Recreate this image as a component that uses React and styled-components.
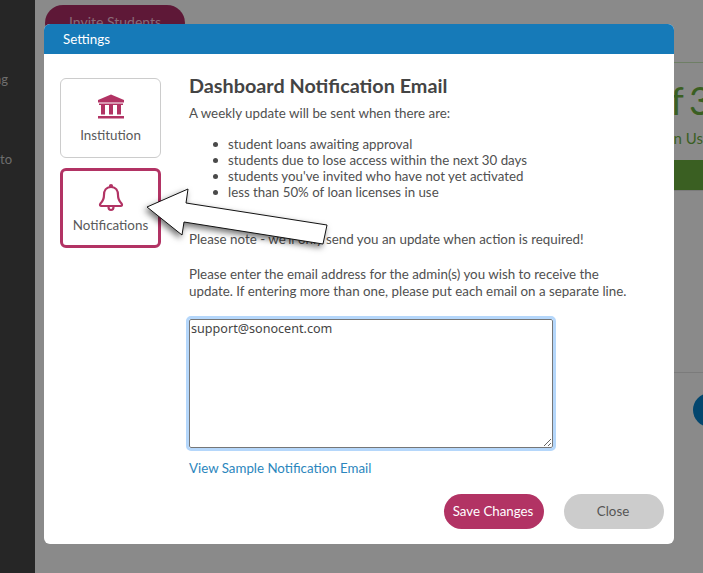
import React from "react";
import styled, { createGlobalStyle } from "styled-components";

const Global = createGlobalStyle`
  html, body { margin: 0; padding: 0; background: #8a8a8a; }
  body { font-family: "Noto Sans", "Open Sans", sans-serif; }
`;

const Page = styled.div`
  position: relative;
  width: 703px;
  height: 573px;
  overflow: hidden;
  display: grid;
  grid-template-columns: 35px 1fr;
  background: #8a8a8a;
`;

const Sidebar = styled.aside`
  background: #262626;
  padding-top: 71px;
  display: flex;
  flex-direction: column;
  gap: 64px;
  overflow: hidden;
`;

const SideItem = styled.div`
  width: ${(p) => p.$end}px;
  display: flex;
  justify-content: flex-end;
  font: 13px/16px "Lato", sans-serif;
  color: #6e6e6e;
  white-space: nowrap;
`;

const Main = styled.main`
  min-width: 0;
  overflow: hidden;
  padding: 5px 0 0 10px;
`;

const InviteButton = styled.div`
  width: 140px;
  height: 36px;
  box-sizing: border-box;
  padding-top: 9px;
  border-radius: 18px;
  background: #5e1837;
  color: #8a6a78;
  font: 14px/16px "Lato", sans-serif;
  text-align: center;
`;

const Panel = styled.section`
  margin-top: 21px;
  height: 309px;
  border-top: 1px solid #6f7f66;
  border-bottom: 1px solid #7b7b7b;
  display: flex;
  flex-direction: column;
  align-items: flex-end;
`;

const Figure = styled.div`
  margin: 14px -30px 0 0;
  display: flex;
  justify-content: flex-end;
  font: 38px/46px "Lato", sans-serif;
  word-spacing: -4px;
  color: #3a5f22;
  white-space: pre;
`;

const FigureLabel = styled.div`
  margin-top: 6px;
  font: 15px/18px "Lato", sans-serif;
  color: #3a5f22;
  white-space: nowrap;
`;

const ProgressBar = styled.div`
  margin-top: 13px;
  width: 100%;
  height: 30px;
  background: #3a5f22;
  border-bottom: 1px solid #7b7b7b;
`;

const RoundAction = styled.div`
  position: absolute;
  left: 693px;
  top: 393px;
  width: 34px;
  height: 34px;
  border-radius: 50%;
  background: #03466e;
`;

const Modal = styled.div`
  position: absolute;
  left: 44px;
  top: 24px;
  width: 630px;
  height: 520px;
  background: #fff;
  border-radius: 6px;
  overflow: hidden;
  display: flex;
  flex-direction: column;
  font-family: "Lato", sans-serif;
  color: #505050;
`;

const ModalHeader = styled.header`
  height: 30px;
  flex: none;
  background: #167ab8;
  color: #fff;
  font-size: 13.4px;
  line-height: 30px;
  padding-left: 19px;
`;

const ModalBody = styled.div`
  flex: 1;
  display: flex;
  padding: 19px 10px 0 16px;
  min-height: 0;
`;

const Tabs = styled.nav`
  width: 101px;
  flex: none;
  margin-top: 5px;
  display: flex;
  flex-direction: column;
  gap: 10px;
`;

const Tab = styled.div`
  width: 101px;
  height: 80px;
  box-sizing: border-box;
  border-radius: 6px;
  border: ${(p) => (p.$active ? "3px solid #b23364" : "1px solid #cccccc")};
  display: flex;
  flex-direction: column;
  align-items: center;
  padding-top: ${(p) => (p.$active ? "12px" : "15px")};
  gap: ${(p) => (p.$active ? "3px" : "7px")};
  font-size: 13.4px;
  line-height: 18px;
  color: #5a5a5a;
`;

const Content = styled.div`
  margin-left: 28px;
  flex: 1;
  min-width: 0;
  display: flex;
  flex-direction: column;
`;

const Title = styled.h1`
  margin: 0;
  font-size: 19.8px;
  line-height: 24px;
  font-weight: 700;
  color: #444;
`;

const Paragraph = styled.p`
  margin: ${(p) => p.$top || 0}px 0 0;
  font-size: 13.35px;
  line-height: ${(p) => p.$lead || 16}px;
  white-space: nowrap;
`;

const Bullets = styled.ul`
  margin: 15px 0 0;
  padding: 0 0 0 24px;
  list-style: none;
  font-size: 13.3px;
  line-height: 16px;
`;

const Bullet = styled.li`
  display: flex;
  align-items: center;
  gap: 10px;
  &::before {
    content: "";
    flex: none;
    width: 5px;
    height: 5px;
    border-radius: 50%;
    background: #4a4a4a;
  }
`;

const EmailBox = styled.textarea`
  margin: 19px 0 0;
  width: 364px;
  height: 129px;
  box-sizing: border-box;
  padding: 1px 1px;
  display: block;
  border: 1px solid #767676;
  border-radius: 2px;
  outline: 3px solid #b5d7fb;
  outline-offset: 0;
  font: 12.6px/16px "Noto Sans", sans-serif;
  color: #444;
  background: #fff;
`;

const SampleLink = styled.a`
  margin-top: 12px;
  font-size: 13.3px;
  line-height: 16px;
  color: #2b86bd;
  text-decoration: none;
`;

const Footer = styled.div`
  display: flex;
  justify-content: flex-end;
  gap: 20px;
  margin-top: 18px;
`;

const PillButton = styled.button`
  width: 100px;
  height: 35px;
  border: 0;
  border-radius: 18px;
  background: ${(p) => (p.$primary ? "#b23364" : "#cccccc")};
  color: ${(p) => (p.$primary ? "#fff" : "#555")};
  font: 13.3px/16px "Lato", sans-serif;
  padding: 0 2px 1px 0;
`;

const ArrowOverlay = styled.svg`
  position: absolute;
  left: 140px;
  top: 180px;
  width: 220px;
  height: 90px;
  overflow: visible;
  filter: drop-shadow(-2px 3px 3px rgba(0, 0, 0, 0.55));
`;

const BankIcon = () => (
  <svg width="28" height="25" viewBox="0 0 28 25" fill="#b23364">
    <path d="M14 0.5 L27 6 V8.5 H1 V6 Z" />
    <rect x="4" y="10" width="4" height="10.5" />
    <rect x="12" y="10" width="4" height="10.5" />
    <rect x="20" y="10" width="4" height="10.5" />
    <rect x="2" y="9.5" width="24" height="1.5" />
    <rect x="1" y="22" width="26" height="2.5" />
  </svg>
);

const BellIcon = () => (
  <svg width="26" height="30" viewBox="0 0 26 30" fill="none" stroke="#b23364" strokeWidth="2.2" strokeLinejoin="round">
    <path d="M13 4 C8 4 6 8 6 12 C6 17 4.5 18.5 2.5 20.5 C1.5 21.8 2 23 3.5 23 H22.5 C24 23 24.5 21.8 23.5 20.5 C21.5 18.5 20 17 20 12 C20 8 18 4 13 4 Z" />
    <circle cx="13" cy="3" r="1" fill="#b23364" />
    <path d="M10.5 24 C10.5 28 15.5 28 15.5 24" />
  </svg>
);

export default function App() {
  return (
    <Page>
      <Global />
      <Sidebar>
        <SideItem $end={8}>Training</SideItem>
        <SideItem $end={12}>Opt in to</SideItem>
      </Sidebar>
      <Main>
        <InviteButton>Invite Students</InviteButton>
        <Panel>
          <Figure>22 of 30</Figure>
          <FigureLabel>Licenses in Us</FigureLabel>
          <ProgressBar />
        </Panel>
      </Main>
      <RoundAction />
      <Modal>
        <ModalHeader>Settings</ModalHeader>
        <ModalBody>
          <Tabs>
            <Tab>
              <BankIcon />
              Institution
            </Tab>
            <Tab $active>
              <BellIcon />
              Notifications
            </Tab>
          </Tabs>
          <Content>
            <Title>Dashboard Notification Email</Title>
            <Paragraph $top={8}>A weekly update will be sent when there are:</Paragraph>
            <Bullets>
              <Bullet>student loans awaiting approval</Bullet>
              <Bullet>students due to lose access within the next 30 days</Bullet>
              <Bullet>students you've invited who have not yet activated</Bullet>
              <Bullet>less than 50% of loan licenses in use</Bullet>
            </Bullets>
            <Paragraph $top={31}>Please note - we'll only send you an update when action is required!</Paragraph>
            <Paragraph $top={19} $lead={17}>
              Please enter the email address for the admin(s) you wish to receive the
              <br />
              update. If entering more than one, please put each email on a separate line.
            </Paragraph>
            <EmailBox defaultValue="support@sonocent.com" />
            <SampleLink href="#">View Sample Notification Email</SampleLink>
            <Footer>
              <PillButton $primary>Save Changes</PillButton>
              <PillButton>Close</PillButton>
            </Footer>
          </Content>
        </ModalBody>
      </Modal>
      <ArrowOverlay viewBox="0 0 220 90">
        <path
          d="M7 27 L48 9 L46 23 L187 45 L183 64 L44 42 L42 55 Z"
          fill="#fff"
          stroke="#111"
          strokeWidth="1"
        />
      </ArrowOverlay>
    </Page>
  );
}
